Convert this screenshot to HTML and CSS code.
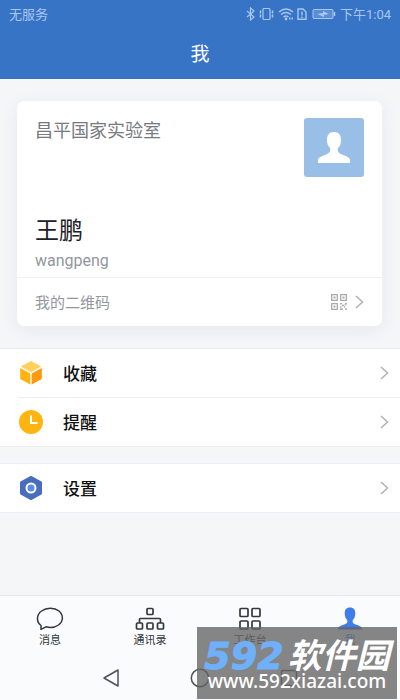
FILE: index.html
```html
<!DOCTYPE html>
<html lang="zh-CN">
<head>
<meta charset="utf-8">
<meta name="viewport" content="width=device-width, initial-scale=1">
<title>我</title>
<link rel="stylesheet" href="styles.css">
</head>
<body>
<header class="top">
  <div class="status">
    <span>无服务</span>
    <div class="status-right">
      <svg width="62" height="14" viewBox="0 0 62 14" fill="none" stroke="currentColor" stroke-width="1.2" aria-hidden="true">
        <path d="M1 4l7 6-3.500 3V1L8 4l-7 6"/>
        <rect x="17" y="1.500" width="7" height="11" rx="1"/>
        <path d="M14.500 3.500v7M26.500 3.500v7" stroke-width="1.500" stroke-dasharray="3 1"/>
        <path d="M33 5q7-6 14 0M35 7.500q5-4 10 0M37.500 10q2.500-2 5 0" stroke-width="1.400"/>
        <circle cx="40" cy="12" r=".8" fill="currentColor"/>
        <path d="M43 11.500h4" stroke-width="2" stroke-dasharray="1.500 1"/>
        <path d="M52 12.300V2h5l3 3v7.300zM56 4.500v4M56 9.500v1.500" stroke-width="1.400"/>
      </svg>
      <svg width="24" height="14" viewBox="0 0 24 14" aria-hidden="true">
        <rect x="1" y="2.500" width="20" height="9" rx="1" fill="currentColor" fill-opacity=".3" stroke="currentColor"/>
        <path d="M22.500 5v4" stroke="currentColor" stroke-width="1.500"/>
        <path d="M5 7l6-1 0-2 6 3-5 1 0 2z" fill="currentColor"/>
      </svg>
      <span>下午1:04</span>
    </div>
  </div>
  <h1>我</h1>
</header>
<main>
  <section class="card">
    <div class="profile">
      <div class="names">
        <p class="org">昌平国家实验室</p>
        <h2>王鹏</h2>
        <p class="account">wangpeng</p>
      </div>
      <svg class="avatar" viewBox="0 0 60 59" role="img" aria-label="头像">
        <rect width="60" height="59" rx="3" fill="#9abfe6"/>
        <path d="M30 14c-5 0-7 3-7 8 0 4 1 6 3 8 1 4-1 5-4 6.500-5 2-8 3-8 6V45h32v-2.500c0-3-3-4-8-6-3-1.500-5-2.500-4-6.500 2-2 3-4 3-8 0-5-2-8-7-8z" fill="#fff"/>
      </svg>
    </div>
    <a class="qr" href="#qr">
      <span>我的二维码</span>
      <svg class="code" width="16" height="16" viewBox="0 0 16 16" fill="none" stroke="currentColor" aria-hidden="true">
        <path d="M.7.700h5.600v5.600H.7zM9.700.700h5.600v5.600H9.700zM.7 9.700h5.600v5.600H.7z" stroke-width="1.300"/>
        <path d="M2.500 3.500h2M11.500 3.500h2M2.500 12.500h2" stroke-width="2"/>
        <path d="M9 9.700h2M14 9.700h2M11 11.500h2M9 13h1.500M13 13h1M9 15.300h3M14 15h2M13.500 11h1" stroke-width="1.400"/>
      </svg>
      <svg class="chevron" viewBox="0 0 9 14" aria-hidden="true"><path d="M1 1l6.500 6L1 13"/></svg>
    </a>
  </section>
  <nav class="list" aria-label="收藏与提醒">
    <a class="item" href="#favorites">
      <svg width="24" height="24" viewBox="0 0 24 24" aria-hidden="true">
        <path d="M12 .5l9.500 5-9.500 5.200L2.500 5.500z" fill="#ffd15c" stroke="#ffd15c" stroke-linejoin="round"/>
        <path d="M1.200 7l10.100 5.500V23.500L2 18.500q-.8-.5-.8-1.500z" fill="#ffb310"/>
        <path d="M22.800 7l-10.100 5.500V23.500l9.300-5q.8-.5.8-1.500z" fill="#ff9a0c"/>
      </svg>
      <span>收藏</span>
      <svg class="chevron" viewBox="0 0 9 14" aria-hidden="true"><path d="M1 1l6.500 6L1 13"/></svg>
    </a>
    <a class="item" href="#reminders">
      <svg width="24" height="24" viewBox="0 0 24 24" aria-hidden="true">
        <circle cx="12" cy="12" r="12" fill="#ffb410"/>
        <path d="M12 5.500V13h6.500" fill="none" stroke="#fff" stroke-width="2"/>
      </svg>
      <span>提醒</span>
      <svg class="chevron" viewBox="0 0 9 14" aria-hidden="true"><path d="M1 1l6.500 6L1 13"/></svg>
    </a>
  </nav>
  <nav class="list" aria-label="设置">
    <a class="item" href="#settings">
      <svg width="24" height="24" viewBox="0 0 24 24" aria-hidden="true">
        <path d="M12 1l10 5.500v11L12 23 2 17.500v-11z" fill="#4a6cbd" stroke="#4a6cbd" stroke-width="2" stroke-linejoin="round"/>
        <circle cx="12" cy="12" r="4.500" fill="#5b8bea" stroke="#fff" stroke-width="2"/>
      </svg>
      <span>设置</span>
      <svg class="chevron" viewBox="0 0 9 14" aria-hidden="true"><path d="M1 1l6.500 6L1 13"/></svg>
    </a>
  </nav>
</main>
<footer class="bottom">
  <nav class="tabs" aria-label="主导航">
    <a href="#messages">
      <svg width="30" height="24" viewBox="0 0 30 24" fill="none" stroke="currentColor" stroke-width="1.500" stroke-linejoin="round" aria-hidden="true"><path d="M6 18.500C1 15 1.500 7.500 6.500 4c5-3.700 13-3.500 17.500 0 4.700 4.200 4.500 10.500-.5 14-3.800 2.700-8.500 3-12.500 1.800L6 22.300z"/></svg>
      <span>消息</span>
    </a>
    <a href="#contacts">
      <svg width="30" height="24" viewBox="0 0 30 24" fill="none" stroke="currentColor" stroke-width="1.700" aria-hidden="true"><rect x="12" y="1.500" width="6" height="6" rx="1"/><rect x="1.500" y="16" width="6" height="6" rx="1"/><rect x="12" y="16" width="6" height="6" rx="1"/><rect x="22.500" y="16" width="6" height="6" rx="1"/><path d="M4.500 16v-3.500q0-1 1-1h19q1 0 1 1V16"/></svg>
      <span>通讯录</span>
    </a>
    <a href="#workspace">
      <svg width="30" height="24" viewBox="0 0 30 24" fill="none" stroke="currentColor" stroke-width="1.700" aria-hidden="true"><rect x="5" y="1.500" width="8" height="8" rx="1"/><rect x="17" y="1.500" width="8" height="8" rx="1"/><rect x="5" y="14" width="8" height="8" rx="1"/><rect x="17" y="14" width="8" height="8" rx="1"/></svg>
      <span>工作台</span>
    </a>
    <a class="active" href="#me" aria-current="page">
      <svg width="30" height="24" viewBox="0 0 30 24" fill="currentColor" aria-hidden="true"><path d="M15 .5c-4 0-5.300 2.500-5.300 6 0 3 1 5 2.500 6.500.8 3-.7 3.500-3 4.500C5 19.200 3 19.500 3 22.500h24c0-3-2-3.300-6.200-5-2.300-1-3.800-1.500-3-4.500 1.500-1.500 2.500-3.500 2.500-6.500 0-3.500-1.300-6-5.300-6z"/></svg>
      <span>我</span>
    </a>
  </nav>
  <div class="system">
    <button aria-label="返回"><svg width="20" height="20" viewBox="0 0 20 20"><path d="M17 2v16L3 10z"/></svg></button>
    <button aria-label="主屏幕"><svg width="20" height="20" viewBox="0 0 20 20"><circle cx="10" cy="10" r="8.700"/></svg></button>
    <button aria-label="最近任务"><svg width="20" height="20" viewBox="0 0 20 20"><rect x="2.500" y="2.500" width="15" height="15" rx="1"/></svg></button>
  </div>
</footer>
<aside class="watermark">
  <div class="brand"><span class="number">592</span><span class="site">软件园</span></div>
  <div class="url">www.592xiazai.com</div>
</aside>
</body>
</html>
```
FILE: styles.css
```css
* {
  box-sizing: border-box;
}

body {
  margin: 0;
  min-height: 100vh;
  display: flex;
  flex-direction: column;
  position: relative;
  background: #f4f6f8;
  color: #111;
  font-family: Roboto, "Noto Sans CJK SC", sans-serif;
}

h1, h2, p {
  margin: 0;
  font-weight: 400;
}

a {
  color: inherit;
  text-decoration: none;
}

svg {
  display: block;
  flex: none;
}

.top {
  background: #3874c6;
  color: #fff;
}

.status {
  display: flex;
  justify-content: space-between;
  align-items: center;
  height: 27px;
  padding: 0 9px;
  color: #a9c6ee;
  font-size: 13px;
}

.status-right {
  display: flex;
  align-items: center;
  gap: 4px;
}

h1 {
  padding-top: 4px;
  font-size: 19px;
  line-height: 48px;
  text-align: center;
}

main {
  flex: 1;
  padding-top: 22px;
}

.card {
  margin: 0 18px 22px 17px;
  background: #fff;
  border-radius: 7px;
  box-shadow: 0 4px 18px rgba(60, 80, 110, 0.08);
}

.profile {
  display: flex;
  justify-content: space-between;
  padding: 17px 18px 4px;
}

.org {
  color: #777b81;
  font-size: 18px;
  line-height: 26px;
}

h2 {
  margin-top: 69px;
  color: #1d2028;
  font-size: 24px;
  line-height: 36px;
}

.account {
  color: #92979e;
  font-size: 16px;
  line-height: 24px;
}

.avatar {
  width: 60px;
  height: 59px;
}

.qr {
  display: flex;
  align-items: center;
  height: 49px;
  padding: 0 18px;
  border-top: 1px solid #f0f1f3;
  color: #92979e;
  font-size: 15px;
}

.code {
  margin-left: auto;
  margin-right: 8px;
  color: #aaa;
}

.chevron {
  width: 9px;
  height: 14px;
  fill: none;
  stroke: #b0b1b3;
  stroke-width: 1.5;
}

.list {
  margin-bottom: 16px;
  background: #fff;
  border-top: 1px solid #eaecef;
  border-bottom: 1px solid #eaecef;
}

.item {
  display: flex;
  align-items: center;
  gap: 20px;
  height: 48px;
  padding: 0 11px 0 19px;
  font-size: 17px;
}

.item span {
  flex: 1;
  font-weight: 500;
}

.item span,
.qr span {
  padding-bottom: 1px;
}

.item + .item {
  height: 49px;
  background: linear-gradient(#eceef0, #eceef0) 18px 0 / 100% 1px no-repeat;
}

.bottom {
  background: #fafbfc;
  border-top: 1px solid #e6e8ea;
}

.tabs {
  display: grid;
  grid-template-columns: repeat(4, 1fr);
  height: 60px;
  padding-top: 11px;
  color: #34373c;
  font-size: 11px;
  line-height: 19px;
}

.tabs a {
  display: flex;
  flex-direction: column;
  align-items: center;
}

.tabs .active {
  color: #3f7de8;
}

.system {
  display: flex;
  justify-content: center;
  gap: 69px;
  height: 44px;
  padding-top: 12px;
}

.system button {
  width: 20px;
  height: 20px;
  padding: 0;
  border: 0;
  background: none;
}

.system svg {
  fill: none;
  stroke: #4f5257;
  stroke-width: 1.5;
  stroke-linejoin: round;
}

.watermark {
  position: absolute;
  right: 3px;
  bottom: 1px;
  width: 200px;
  height: 72px;
  padding-top: 10px;
  background: rgba(100, 100, 100, 0.78);
  color: #fff;
  text-align: center;
  white-space: nowrap;
}

.brand {
  display: flex;
  justify-content: center;
  align-items: flex-start;
  gap: 4px;
  height: 32px;
}

.number {
  color: #6fb0fb;
  font: italic 700 38px/38px "DejaVu Sans", sans-serif;
  -webkit-text-stroke: 1px #6fb0fb;
}

.site {
  font: italic 700 34px/34px "Noto Sans CJK SC", sans-serif;
}

.url {
  font: 500 19px/24px "Noto Sans", sans-serif;
}
```
